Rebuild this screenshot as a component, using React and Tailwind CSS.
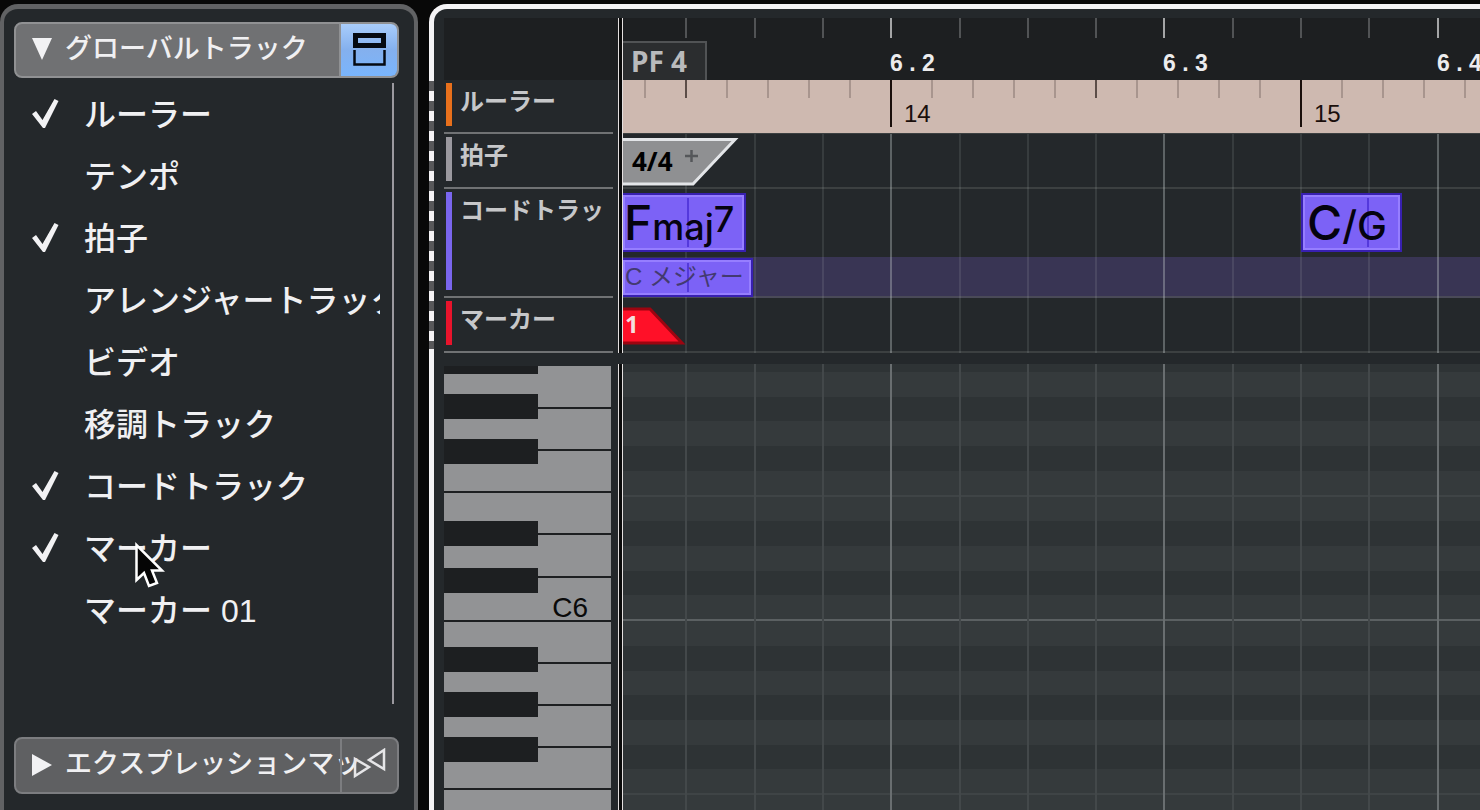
import React, { useState } from 'react';

const BEAT_WIDTH = 68.3;
const FRAME_WIDTH = 41;

const initialTracks = [
  { id: 'ruler', name: 'ルーラー', visible: true },
  { id: 'tempo', name: 'テンポ', visible: false },
  { id: 'signature', name: '拍子', visible: true },
  { id: 'arranger', name: 'アレンジャートラック', visible: false },
  { id: 'video', name: 'ビデオ', visible: false },
  { id: 'transpose', name: '移調トラック', visible: false },
  { id: 'chord', name: 'コードトラック', visible: true },
  { id: 'marker', name: 'マーカー', visible: true },
  { id: 'marker01', name: 'マーカー 01', visible: false },
];

// sixteenths; every fourth one is a beat
const beatLines = Array.from({ length: 48 }, (_, i) => ({
  left: Math.round((i + 1) * BEAT_WIDTH) - 6,
  isBeat: (i + 1) % 4 === 0,
  label: `6 . ${(i + 1) / 4 + 1}`,
}));

// tenths of a second on the time ruler
const frames = Array.from({ length: 80 }, (_, i) => ({
  left: 21 + i * FRAME_WIDTH,
  isSecond: i % 10 === 6,
  isHalf: i % 10 === 1,
  label: 14 + (i - 6) / 10,
}));

const lanes = [
  'h-2 bg-[#2e3335]',
  'h-[25px] bg-[#353a3c]',
  'h-6 bg-[#2e3335]',
  'h-[25px] bg-[#353a3c]',
  'h-[25px] bg-[#2e3335]',
  'h-[26px] bg-[#353a3c] border-b-2 border-[#3f4446]',
  'h-6 bg-[#353a3c]',
  'h-[25px] bg-[#2e3335]',
  'h-[25px] bg-[#353a3c]',
  'h-6 bg-[#2e3335]',
  'h-[26px] bg-[#353a3c] border-b-2 border-[#5b6062]',
  'h-[25px] bg-[#353a3c]',
  'h-[25px] bg-[#2e3335]',
  'h-6 bg-[#353a3c]',
  'h-[25px] bg-[#2e3335]',
  'h-[25px] bg-[#353a3c]',
  'h-6 bg-[#2e3335]',
  'h-[26px] bg-[#353a3c] border-b-2 border-[#3f4446]',
  'h-[25px] bg-[#353a3c]',
  'h-[25px] bg-[#2e3335]',
];

const whiteKeys = [
  { note: 'A6', height: 'h-[43px]' },
  { note: 'G6', height: 'h-[42px]' },
  { note: 'F6', height: 'h-[42px]' },
  { note: 'E6', height: 'h-[42px]' },
  { note: 'D6', height: 'h-[43px]' },
  { note: 'C6', height: 'h-[44px]' },
  { note: 'B5', height: 'h-[42px]' },
  { note: 'A5', height: 'h-[42px]' },
  { note: 'G5', height: 'h-[42px]' },
  { note: 'F5', height: 'h-[42px]' },
  { note: 'E5', height: 'h-[42px]' },
];

const blackKeys = [
  { note: 'A#6', place: 'top-0 h-2' },
  { note: 'G#6', place: 'top-[28px] h-[25px]' },
  { note: 'F#6', place: 'top-[73px] h-[25px]' },
  { note: 'D#6', place: 'top-[155px] h-[25px]' },
  { note: 'C#6', place: 'top-[202px] h-[25px]' },
  { note: 'A#5', place: 'top-[281px] h-[25px]' },
  { note: 'G#5', place: 'top-[326px] h-[25px]' },
  { note: 'F#5', place: 'top-[371px] h-[25px]' },
];

const CheckMark = () => (
  <svg width="28" height="30" viewBox="0 0 28 30" className="invisible peer-checked:visible">
    <path d="M0 15 L4 12 L10.5 21 L22.5 0 L26.5 2 L13 29 L11 29 Z" fill="#f2f2f4" />
  </svg>
);

const SplitIcon = () => (
  <svg width="33" height="34" viewBox="0 0 33 34" fill="none" stroke="#050a12">
    <path d="M2.5 2.5 H30.5 V12.5 H2.5 Z" strokeWidth="5" />
    <path d="M1.5 17 V31.5 H31.5 V17" strokeWidth="2.5" />
  </svg>
);

const MapIcon = () => (
  <svg width="34" height="32" viewBox="0 0 34 32" fill="none" stroke="#e6e6e8" strokeWidth="2.5">
    <path d="M2 11 V28 L16 19 Z" />
    <path d="M31 2 V21 L16 12 Z" />
  </svg>
);

const Cursor = () => (
  <svg width="30" height="46" viewBox="0 0 30 46" className="absolute left-[131px] top-[533px] pointer-events-none">
    <path d="M1.5 3 V38 L9 31 L14 44 L22 41 L17 28.5 H27 Z" fill="#050505" stroke="#fff" strokeWidth="2.5" />
  </svg>
);

const VisibilityPanel = () => {
  const [tracks, setTracks] = useState(initialTracks);

  const toggle = (id) => {
    setTracks(prev => prev.map(t => (t.id === id ? { ...t, visible: !t.visible } : t)));
  };

  return (
    <aside className="relative w-[418px] shrink-0 flex flex-col bg-[#24282b] border-x-4 border-t-[5px] border-[#616264] rounded-t-[18px] px-[10px] pt-[13px] overflow-hidden">
      <div className="flex h-14 w-[385px] shrink-0 rounded-lg border-2 border-[#909193] bg-[#707173] overflow-hidden">
        <button className="flex flex-1 items-center gap-[13px] pl-4 pb-[2px] text-[27px] font-medium text-[#f0f0f2] whitespace-nowrap">
          <svg width="20" height="22" viewBox="0 0 20 22"><path d="M0 0 H20 L10 22 Z" fill="#f2f2f4" /></svg>
          グローバルトラック
        </button>
        <button aria-label="表示を分割" className="flex w-[58px] items-center justify-center border-l-2 border-[#909193] bg-linear-to-b from-[#a9cdfb] via-[#84b0ee] to-[#79b5fd]">
          <SplitIcon />
        </button>
      </div>

      <ul className="mt-[5px] h-[621px] w-[380px] shrink-0 border-r-2 border-[#9b999f] text-[32px] font-medium text-[#f0f0f2]">
        {tracks.map(track => (
          <li key={track.id}>
            <label className="flex h-[62px] items-center pl-[18px]">
              <input
                type="checkbox"
                checked={track.visible}
                onChange={() => toggle(track.id)}
                className="peer sr-only"
              />
              <CheckMark />
              <span className="ml-6 w-[296px] overflow-hidden pt-[2px] whitespace-nowrap">{track.name}</span>
            </label>
          </li>
        ))}
      </ul>

      <div className="mt-[33px] flex h-[57px] w-[385px] shrink-0 rounded-lg border-2 border-[#7c7d80] bg-[#5f6062]">
        <button className="flex w-[324px] items-center gap-[13px] pl-4 pb-[2px] text-[27px] font-medium text-[#f0f0f2] whitespace-nowrap">
          <svg width="20" height="22" viewBox="0 0 20 22" className="shrink-0"><path d="M0 0 L20 11 L0 22 Z" fill="#f2f2f4" /></svg>
          エクスプレッションマッ
        </button>
        <button aria-label="マップ" className="flex flex-1 items-center justify-center border-l-2 border-[#7c7d80] pb-1">
          <MapIcon />
        </button>
      </div>
      <Cursor />
    </aside>
  );
};

const TrackHeader = ({ name, color, height }) => (
  <div className={`${height} flex w-[169px] border-b-2 border-[#707274] pl-[2px] pt-[3px] pb-[6px]`}>
    <div className={`${color} w-[6px]`}></div>
    <span className="ml-2 overflow-hidden pt-px whitespace-nowrap text-2xl leading-9 font-bold text-[#c6c7c9]">{name}</span>
  </div>
);

const Playhead = () => (
  <div className="w-[5px] shrink-0 border-x border-[#e4e0e0] bg-[#0a0a0a]"></div>
);

const GridLines = ({ beat, sub }) => (
  <div className="absolute inset-0 pointer-events-none">
    {beatLines.map(line => (
      <div
        key={line.left}
        className={`absolute inset-y-0 w-[2px] ${line.isBeat ? beat : sub}`}
        style={{ left: line.left }}
      ></div>
    ))}
  </div>
);

const BarRuler = () => (
  <div className="relative h-[62px] bg-[#1d1f21]">
    {beatLines.map(line => (
      <div key={line.left} className="absolute top-0" style={{ left: line.left }}>
        <div className={`h-5 w-[2px] ${line.isBeat ? 'bg-[#a4a5a6]' : 'bg-[#515355]'}`}></div>
        {line.isBeat && (
          <span className="block pt-[11px] text-[23px] leading-7 font-bold whitespace-nowrap text-[#ececee]">
            {line.label}
          </span>
        )}
      </div>
    ))}
    <div className="absolute left-0 bottom-0 h-[39px] w-[84px] border-t-2 border-r-2 border-[#515355] bg-[#2b2d2f] pl-2 font-[family-name:'Noto_Sans',sans-serif] text-[28px] leading-9 font-bold text-[#b9babc]">
      PF 4
    </div>
  </div>
);

const TimeRuler = () => (
  <div className="relative h-[54px] border-b border-[#3c4041] bg-[#ceb9b0]">
    {frames.map(frame => (
      <div key={frame.left} className="absolute top-0 flex" style={{ left: frame.left }}>
        {frame.isSecond ? (
          <>
            <div className="h-[47px] w-[2px] bg-[#1a0f0c]"></div>
            <span className="pl-3 pt-5 text-2xl leading-7 text-[#1a0f0c]">{frame.label}</span>
          </>
        ) : (
          <div className={`h-[18px] w-[2px] ${frame.isHalf ? 'bg-[#5c4d48]' : 'bg-[#a8958e]'}`}></div>
        )}
      </div>
    ))}
  </div>
);

const clipStyle = 'absolute border-2 border-[#3820b0] bg-[#7c62f6] text-[#05030f] inset-ring-2 inset-ring-[#967eff]';

const Tracks = () => (
  <div className="flex shrink-0">
    <div className="w-[174px] shrink-0">
      <div className="h-[62px] bg-[#1d1f21]"></div>
      <TrackHeader name="ルーラー" color="bg-[#e8701c]" height="h-[54px]" />
      <TrackHeader name="拍子" color="bg-[#9b999f]" height="h-[55px]" />
      <TrackHeader name="コードトラッ" color="bg-[#7a66ee]" height="h-[109px]" />
      <TrackHeader name="マーカー" color="bg-[#e8142c]" height="h-[55px]" />
    </div>
    <Playhead />
    <div className="flex-1 overflow-hidden">
      <BarRuler />
      <TimeRuler />
      <div className="relative">
        <div className="h-[55px] border-b-2 border-[#3c4041]"></div>
        <div className="flex h-[109px] flex-col justify-end border-b-2 border-[#4a4a58]">
          <div className="h-[39px] bg-[#393554]"></div>
        </div>
        <div className="h-[55px] border-b-2 border-[#3c4041]"></div>
        <GridLines beat="bg-[#c8d0d0]/35" sub="bg-[#c8d0d0]/12" />

        {/* signature event */}
        <svg width="118" height="50" viewBox="0 0 118 50" className="absolute left-0 top-[2px]">
          <path d="M-4 3.5 H112 L70 48 H-4 Z" fill="#8f9092" stroke="#e3e5e8" strokeWidth="3" />
          <path d="M62 20 H75 M68.5 14 V26" stroke="#55575a" strokeWidth="2.5" />
        </svg>
        <span className="absolute left-[9px] top-[9px] font-[family-name:'Noto_Sans',sans-serif] text-[26px] leading-9 font-bold text-black">4/4</span>

        {/* chord events */}
        <div className={`${clipStyle} -left-[2px] top-[59px] h-[59px] w-[125px] pl-px font-[family-name:'Inter',sans-serif] font-medium`}>
          <div className="absolute left-[64px] inset-y-[3px] w-[2px] bg-[#5439dc]"></div>
          <div className="relative flex items-baseline">
            <span className="text-5xl leading-[56px]">F</span>
            <span className="text-4xl leading-[56px]">maj</span>
            <sup className="relative -top-2 text-4xl leading-none">7</sup>
          </div>
        </div>
        <div className={`${clipStyle} left-[678px] top-[59px] h-[59px] w-[101px] pl-1 font-[family-name:'Inter',sans-serif] font-medium`}>
          <div className="absolute left-[64px] inset-y-[3px] w-[2px] bg-[#5439dc]"></div>
          <div className="relative flex items-baseline">
            <span className="text-5xl leading-[56px]">C</span>
            <span className="text-[40px] leading-[56px]">/G</span>
          </div>
        </div>
        <div className={`${clipStyle} -left-[2px] top-[124px] h-[39px] w-[132px] pl-[2px] pt-px text-2xl leading-8 whitespace-nowrap`}>
          <div className="absolute left-[64px] inset-y-[3px] w-[2px] bg-[#5439dc]"></div>
          <span className="relative text-[#433a70]">C メジャー</span>
        </div>

        {/* marker */}
        <svg width="64" height="40" viewBox="0 0 64 40" className="absolute left-0 top-[172px]">
          <path d="M-4 3 H27 L59 37 H-4 Z" fill="#ff1028" stroke="#9c0410" strokeWidth="3" />
        </svg>
        <span className="absolute left-[2px] top-[174px] font-[family-name:'Noto_Sans',sans-serif] text-2xl leading-8 font-bold text-[#f4dede]">1</span>
      </div>
    </div>
  </div>
);

const Keyboard = () => (
  <div className="relative mt-[2px] mr-[7px] w-[167px] shrink-0">
    {whiteKeys.map(key => (
      <button
        key={key.note}
        aria-label={key.note}
        className={`${key.height} flex w-full items-end justify-end border-b-2 border-[#1d1f21] bg-[#929395] pr-[23px] text-[28px] leading-6 text-[#0a0a0a]`}
      >
        {key.note === 'C6' && key.note}
      </button>
    ))}
    {blackKeys.map(key => (
      <button key={key.note} aria-label={key.note} className={`${key.place} absolute left-0 w-[94px] bg-[#1d1f21]`}></button>
    ))}
  </div>
);

const PianoRoll = () => (
  <div className="mt-[11px] flex min-h-0 flex-1 overflow-hidden">
    <Keyboard />
    <Playhead />
    <div className="relative flex-1 overflow-hidden">
      {lanes.map((lane, i) => (
        <div key={i} className={lane}></div>
      ))}
      <GridLines beat="bg-[#696e70]" sub="bg-[#43484a]" />
    </div>
  </div>
);

const App = () => {
  return (
    <div className="flex h-screen gap-[11px] overflow-hidden bg-[#080808] pt-1 font-[family-name:'Liberation_Sans','Noto_Sans_CJK_JP',sans-serif]">
      <VisibilityPanel />
      <main className="relative min-w-0 flex-1">
        <div className="flex h-full flex-col overflow-hidden rounded-tl-[18px] border-l-[5px] border-t-[5px] border-[#f4f3f5] bg-[#24282b] pl-[10px] pt-[9px]">
          <Tracks />
          <PianoRoll />
        </div>
        {/* drag edge beside the track list */}
        <div className="absolute left-0 top-[77px] h-[268px] w-[5px] bg-[repeating-linear-gradient(to_bottom,#58585a_0px,#58585a_10px,#f4f3f5_10px,#f4f3f5_20px)]"></div>
      </main>
    </div>
  );
};

export default App;
